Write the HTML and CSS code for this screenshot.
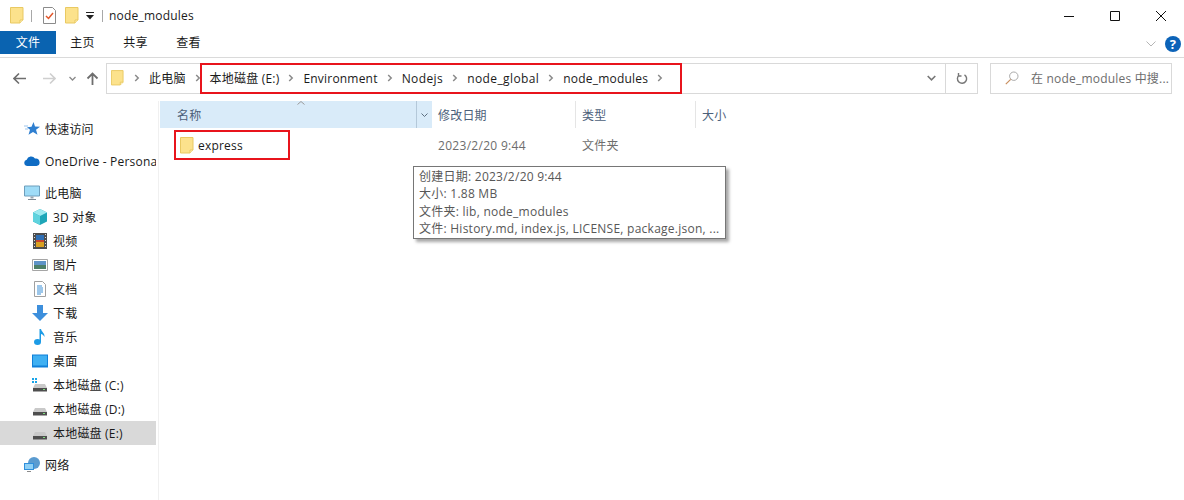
FILE: index.html
```html
<!DOCTYPE html>
<html lang="zh-CN">
<head>
  <meta charset="UTF-8" />
  <title>node_modules</title>
  <link rel="stylesheet" href="styles.css">
</head>
<body>

  <svg class="defs" width="0" height="0">
    <symbol id="folder" viewBox="0 0 14 17">
      <path d="M.5.5h12.5v12.5l-3 3H.5z" fill="#fce28c" stroke="#e9c962"/>
      <path d="M10 16v-3h3" fill="#fff3c4" stroke="#e9c962"/>
    </symbol>
    <symbol id="chev" viewBox="0 0 6 8">
      <path d="M1.2 1l3 3-3 3" fill="none" stroke="#8a8a8a" stroke-width="1.5"/>
    </symbol>
    <symbol id="disk" viewBox="0 0 16 10">
      <path d="M3 2h10l2 4v3H1V6z" fill="#c9c9c9"/>
      <path d="M1 6h14v3.500H1z" fill="#4e4e4e"/>
      <path d="M11 7h2v1h-2z" fill="#7fe07f"/>
    </symbol>
  </svg>

  <header class="titlebar">
    <svg class="ico-folder"><use href="#folder"/></svg>
    <i class="qat-sep"></i>
    <svg class="qat-check" viewBox="0 0 13 17">
      <path d="M.5.5h9l3 3v13H.5z" fill="#fff" stroke="#8b8b8b"/>
      <path d="M3 9l2.500 2.500L10 6" fill="none" stroke="#e2562a" stroke-width="1.500"/>
    </svg>
    <svg class="ico-folder qat-folder"><use href="#folder"/></svg>
    <svg class="qat-drop" viewBox="0 0 8 8">
      <path d="M0 .5h8" stroke="#222"/>
      <path d="M0 3h8L4 7.500z" fill="#222"/>
    </svg>
    <i class="qat-sep qat-sep-last"></i>
    <span class="title">node_modules</span>
    <div class="winbtns">
      <svg viewBox="0 0 46 20"><path d="M0 10.500h10" stroke="#111"/></svg>
      <svg viewBox="0 0 46 20"><path d="M.5 5.500h9v9h-9z" fill="none" stroke="#111"/></svg>
      <svg viewBox="0 0 46 20"><path d="M0 5l10 10M10 5L0 15" stroke="#111"/></svg>
    </div>
  </header>

  <nav class="ribbon">
    <span class="tab tab-file">文件</span>
    <span class="tab">主页</span>
    <span class="tab">共享</span>
    <span class="tab">查看</span>
    <div class="ribbon-right">
      <svg class="ribbon-chev" viewBox="0 0 10 6"><path d="M.5.500l4.500 4.500 4.500-4.500" fill="none" stroke="#b5b5b5"/></svg>
      <svg class="help" viewBox="0 0 16 16">
        <circle cx="8" cy="8" r="8" fill="#0c63b8"/>
        <text x="8" y="12.500" text-anchor="middle" class="help-q">?</text>
      </svg>
    </div>
  </nav>

  <div class="addressrow">
    <svg class="nav-ico" viewBox="0 0 13 12"><path d="M13 6H1.500M6 1L1 6l5 5" fill="none" stroke="#6e6e6e" stroke-width="1.600"/></svg>
    <svg class="nav-ico" viewBox="0 0 13 12"><path d="M0 6h11.500M7 1l5 5-5 5" fill="none" stroke="#cfcfcf" stroke-width="1.600"/></svg>
    <svg class="nav-down" viewBox="0 0 7 5"><path d="M.5 1l3 3 3-3" fill="none" stroke="#8a8a8a" stroke-width="1.300"/></svg>
    <svg class="nav-ico" viewBox="0 0 12 13"><path d="M6 13V1.500M1 6.500l5-5 5 5" fill="none" stroke="#6e6e6e" stroke-width="1.800"/></svg>

    <div class="address">
      <svg class="ico-folder addr-folder"><use href="#folder"/></svg>
      <div class="crumbs">
        <svg class="crumb-chev"><use href="#chev"/></svg>
        <span>此电脑</span>
        <svg class="crumb-chev"><use href="#chev"/></svg>
        <span>本地磁盘 (E:)</span>
        <svg class="crumb-chev"><use href="#chev"/></svg>
        <span>Environment</span>
        <svg class="crumb-chev"><use href="#chev"/></svg>
        <span class="wide">Nodejs</span>
        <svg class="crumb-chev"><use href="#chev"/></svg>
        <span class="wide">node_global</span>
        <svg class="crumb-chev"><use href="#chev"/></svg>
        <span>node_modules</span>
        <svg class="crumb-chev"><use href="#chev"/></svg>
      </div>
      <svg class="addr-drop" viewBox="0 0 9 6"><path d="M.7 1l3.800 3.800L8.300 1" fill="none" stroke="#777" stroke-width="1.600"/></svg>
      <div class="addr-refresh">
        <svg viewBox="0 0 12 13"><path d="M3 3.200a4.600 4.600 0 1 0 5.500-.4M2.500 1v3h3" fill="none" stroke="#777" stroke-width="1.400"/></svg>
      </div>
    </div>

    <div class="search">
      <svg class="search-ico" viewBox="0 0 14 14"><circle cx="8.800" cy="5.200" r="4.200" fill="none" stroke="#a9a9a9"/><path d="M5.700 8.300L.8 13.200" stroke="#c98f5f" stroke-width="1.200"/></svg>
      <span>在 node_modules 中搜...</span>
    </div>
  </div>

  <main class="explorer">
    <aside class="sidebar">
      <div class="nav-item top">
        <svg viewBox="0 0 16 16"><path d="M9.500 1l1.500 4.500 5 .3-4 3 1.500 5-4.500-2.800-4.500 2.800 1.500-5-3-2.500 4.500-.5z" fill="#2f7fd0"/><path d="M0 5h4M1 8h3" stroke="#9cc3ea"/></svg>
        快速访问
      </div>
      <div class="nav-item top gap">
        <svg viewBox="0 0 16 10"><path d="M3.500 10a3.200 3.200 0 0 1-.8-6.300A4.600 4.600 0 0 1 11 2.600 3.700 3.700 0 0 1 12.500 10z" fill="#0f6cc4"/></svg>
        OneDrive - Personal
      </div>
      <div class="nav-item top gap">
        <svg viewBox="0 0 16 15"><path d="M.5.500h15v10H.5z" fill="#9fdcf7" stroke="#6d9ebc"/><path d="M6.500 11h3v2h-3z" fill="#9aa7b1"/><path d="M4 13.500h8v1H4z" fill="#7d8a94"/></svg>
        此电脑
      </div>
      <div class="nav-item sub">
        <svg viewBox="0 0 16 16"><path d="M8 0l7 3.500v9L8 16l-7-3.500v-9z" fill="#1fa6b8"/><path d="M8 0l7 3.500L8 7 1 3.500z" fill="#9feaf0"/><path d="M1 3.500L8 7v9l-7-3.500z" fill="#5fd3de"/></svg>
        3D 对象
      </div>
      <div class="nav-item sub">
        <svg viewBox="0 0 14 16"><path d="M0 0h14v16H0z" fill="#4d4d4d"/><path d="M3 2h8v5H3z" fill="#2f6fb5"/><path d="M3 8h8v6H3z" fill="#d9a020"/><path d="M3 7h8v2H3z" fill="#c8452e"/><path d="M1 1.500h1M1 4.500h1M1 7.500h1M1 10.500h1M1 13.500h1M12 1.500h1M12 4.500h1M12 7.500h1M12 10.500h1M12 13.500h1" stroke="#ddd"/></svg>
        视频
      </div>
      <div class="nav-item sub">
        <svg viewBox="0 0 16 12"><path d="M.5.500h15v11H.5z" fill="#fff" stroke="#a5a5a5"/><path d="M2 2h12v4H2z" fill="#5e93c7"/><path d="M2 6h12v4H2z" fill="#4d7f67"/></svg>
        图片
      </div>
      <div class="nav-item sub">
        <svg viewBox="0 0 12 16"><path d="M.5.500h8l3 3v12H.5z" fill="#fff" stroke="#a0a0a0"/><path d="M3 5h5M3 7h6M3 9h6M3 11h6M3 13h4" stroke="#3a8fd6"/></svg>
        文档
      </div>
      <div class="nav-item sub">
        <svg viewBox="0 0 16 16"><path d="M5 0h6v8h5l-8 8-8-8h5z" fill="#3d8fdc"/></svg>
        下载
      </div>
      <div class="nav-item sub">
        <svg viewBox="0 0 16 16"><ellipse cx="5.500" cy="13" rx="3.500" ry="3" fill="#1c9be6"/><path d="M7.500 13V0h1.500c.5 3 4 4 3.500 8-1-2-2.500-3-3.500-3v8z" fill="#1c9be6"/></svg>
        音乐
      </div>
      <div class="nav-item sub">
        <svg viewBox="0 0 16 13"><path d="M0 0h16v13H0z" fill="#0f7fd8"/><path d="M1 1h14v10H1z" fill="#3fb0f2"/></svg>
        桌面
      </div>
      <div class="nav-item sub">
        <svg viewBox="0 0 16 14"><path d="M0 0h2v2H0zM3 0h2v2H3zM0 3h2v2H0zM3 3h2v2H3z" fill="#19a4e8"/><use href="#disk" y="4" height="10" width="16"/></svg>
        本地磁盘 (C:)
      </div>
      <div class="nav-item sub">
        <svg viewBox="0 0 16 14"><use href="#disk" y="4" height="10" width="16"/></svg>
        本地磁盘 (D:)
      </div>
      <div class="nav-item sub selected">
        <svg viewBox="0 0 16 14"><use href="#disk" y="4" height="10" width="16"/></svg>
        本地磁盘 (E:)
      </div>
      <div class="nav-item top gap">
        <svg viewBox="0 0 16 16"><circle cx="10" cy="6" r="6" fill="#5a9bd0"/><path d="M0 6h10v7H0z" fill="#2f8fdc"/><path d="M1 7h8v5H1z" fill="#8fd0f5"/><path d="M3 14h4v1H3z" fill="#8a8a8a"/></svg>
        网络
      </div>
    </aside>

    <section class="files">
      <div class="columns">
        <div class="col col-name">
          名称
          <svg class="sort" viewBox="0 0 8 4"><path d="M.5 3.500L4 .5l3.500 3" fill="none" stroke="#9a9a9a"/></svg>
          <span class="col-drop"><svg viewBox="0 0 7 4"><path d="M.5.500L3.500 3.500 6.500.500" fill="none" stroke="#5d6f80"/></svg></span>
        </div>
        <div class="col col-date">修改日期</div>
        <div class="col col-type">类型</div>
        <div class="col col-size">大小</div>
      </div>
      <div class="row">
        <div class="cell-name">
          <svg class="ico-folder"><use href="#folder"/></svg>
          express
        </div>
        <div class="cell-date">2023/2/20 9:44</div>
        <div class="cell-type">文件夹</div>
      </div>
    </section>
  </main>

  <div class="mark mark-path"></div>
  <div class="mark mark-row"></div>

  <div class="tooltip">
    <div>创建日期: 2023/2/20 9:44</div>
    <div>大小: 1.88 MB</div>
    <div>文件夹: lib, node_modules</div>
    <div>文件: History.md, index.js, LICENSE, package.json, ...</div>
  </div>

</body>
</html>
```

FILE: styles.css
```css
body {
  font-family: 'Open Sans', 'Noto Sans CJK SC', sans-serif;
  font-size: 12px;
  letter-spacing: 0.2px;
  color: #1a1a1a;
  background: #fff;
  margin: 0;
  width: 1184px;
  height: 500px;
  overflow: hidden;
  position: relative;
}
.defs {
  position: absolute;
}
.ico-folder {
  width: 14px;
  height: 17px;
  flex: none;
}

/* title bar */
.titlebar {
  display: flex;
  align-items: center;
  height: 31px;
  padding-left: 10px;
}
.qat-sep {
  width: 1px;
  height: 12px;
  background: #a8a8a8;
  margin: 0 11px 0 7px;
}
.qat-sep-last {
  margin: 0 6px 0 8px;
}
.qat-check {
  width: 13px;
  height: 17px;
}
.qat-folder {
  margin-left: 9px;
}
.qat-drop {
  width: 8px;
  height: 8px;
  margin-left: 7px;
}
.title {
  font-size: 12px;
}
.winbtns {
  display: flex;
  margin-left: auto;
  margin-right: -18px;
}
.winbtns svg {
  width: 46px;
  height: 20px;
}

/* ribbon tabs */
.ribbon {
  display: flex;
  height: 26px;
  border-bottom: 1px solid #dadada;
}
.tab {
  width: 53px;
  height: 23px;
  line-height: 23px;
  text-align: center;
}
.tab-file {
  width: 56px;
  background: #0a63b0;
  color: #fff;
}
.ribbon-right {
  display: flex;
  align-items: center;
  margin-left: auto;
  height: 25px;
  padding-right: 3px;
}
.ribbon-chev {
  width: 10px;
  height: 6px;
  margin-right: 9px;
}
.help {
  width: 16px;
  height: 16px;
}
.help-q {
  font-size: 13px;
  font-weight: 700;
  fill: #fff;
}

/* address row */
.addressrow {
  display: flex;
  align-items: center;
  height: 40px;
  margin-bottom: 3px;
}
.nav-ico {
  width: 13px;
  height: 13px;
  margin-left: 13px;
  flex: none;
}
.nav-ico + .nav-ico {
  margin-left: 17px;
}
.nav-down {
  width: 7px;
  height: 5px;
  margin: 0 10px 0 13px;
}
.nav-down + .nav-ico {
  margin-left: 0;
}
.address {
  display: flex;
  align-items: center;
  width: 872px;
  height: 31px;
  box-sizing: border-box;
  margin-left: 7px;
  border: 1px solid #d9d9d9;
  padding-left: 4px;
}
.addr-folder {
  width: 13px;
  height: 16px;
}
.crumbs {
  display: flex;
  align-items: center;
  gap: 9px;
  margin-left: 10px;
  flex: 1;
}
.crumbs .wide {
  letter-spacing: 0.4px;
}
.crumb-chev {
  width: 6px;
  height: 8px;
}
.addr-drop {
  width: 9px;
  height: 6px;
  margin-right: 9px;
}
.addr-refresh {
  width: 31px;
  height: 29px;
  border-left: 1px solid #d9d9d9;
  display: flex;
  align-items: center;
  justify-content: center;
}
.addr-refresh svg {
  width: 12px;
  height: 13px;
}
.search {
  display: flex;
  align-items: center;
  width: 182px;
  height: 31px;
  box-sizing: border-box;
  margin-left: 12px;
  border: 1px solid #d9d9d9;
  padding-left: 14px;
  color: #6d6d6d;
  white-space: nowrap;
  overflow: hidden;
}
.search-ico {
  width: 14px;
  height: 14px;
  margin-right: 12px;
  flex: none;
}

/* main area */
.explorer {
  display: flex;
  height: 399px;
}
.sidebar {
  width: 158px;
  border-right: 1px solid #f0f0f0;
  padding-top: 16px;
  flex: none;
}
.nav-item {
  display: flex;
  align-items: center;
  height: 24px;
  width: 156px;
  white-space: nowrap;
  overflow: hidden;
}
.nav-item svg {
  width: 16px;
  height: 16px;
  flex: none;
  margin-right: 5px;
}
.top {
  padding-left: 24px;
  box-sizing: border-box;
}
.gap {
  margin-top: 8px;
}
.sub {
  padding-left: 32px;
  box-sizing: border-box;
}
.selected {
  background: #d9d9d9;
}

/* file list */
.files {
  flex: 1;
  margin-left: 1px;
}
.columns {
  display: flex;
  height: 27px;
}
.col {
  display: flex;
  align-items: center;
  padding-left: 6px;
  color: #4c607a;
  box-sizing: border-box;
  border-right: 1px solid #e5e5e5;
  height: 27px;
  position: relative;
}
.col-name {
  width: 272px;
  background: #d9ebf9;
  padding-left: 17px;
  border-right: 0;
}
.col-date {
  width: 144px;
}
.col-type {
  width: 120px;
}
.col-size {
  width: 60px;
  border-right: 0;
}
.sort {
  position: absolute;
  left: 137px;
  top: 0;
  width: 8px;
  height: 4px;
}
.col-drop {
  position: absolute;
  right: 0;
  top: 0;
  width: 15px;
  height: 27px;
  border-left: 1px solid #b4c8d9;
  display: flex;
  align-items: center;
  justify-content: center;
}
.col-drop svg {
  width: 7px;
  height: 4px;
}
.row {
  display: flex;
  align-items: center;
  height: 24px;
  margin-top: 5px;
}
.cell-name {
  display: flex;
  align-items: center;
  gap: 4px;
  width: 278px;
  padding-left: 20px;
  box-sizing: border-box;
  color: #1a1a1a;
}
.cell-date {
  width: 144px;
  color: #6d6d6d;
  letter-spacing: 0.3px;
}
.cell-type {
  color: #6d6d6d;
}

/* red annotation boxes drawn over the shot */
.mark {
  position: absolute;
  border: 2px solid #e8141c;
  box-sizing: border-box;
}
.mark-path {
  left: 200px;
  top: 63px;
  width: 482px;
  height: 31px;
}
.mark-row {
  left: 174px;
  top: 130px;
  width: 116px;
  height: 30px;
}

.tooltip {
  position: absolute;
  left: 413px;
  top: 166px;
  width: 313px;
  height: 73px;
  box-sizing: border-box;
  background: #fff;
  border: 1px solid #767676;
  padding: 1px 5px;
  color: #575757;
  line-height: 17.300px;
  letter-spacing: 0.25px;
  white-space: nowrap;
  box-shadow: 3px 3px 3px rgba(0,0,0,0.35);
}
```
